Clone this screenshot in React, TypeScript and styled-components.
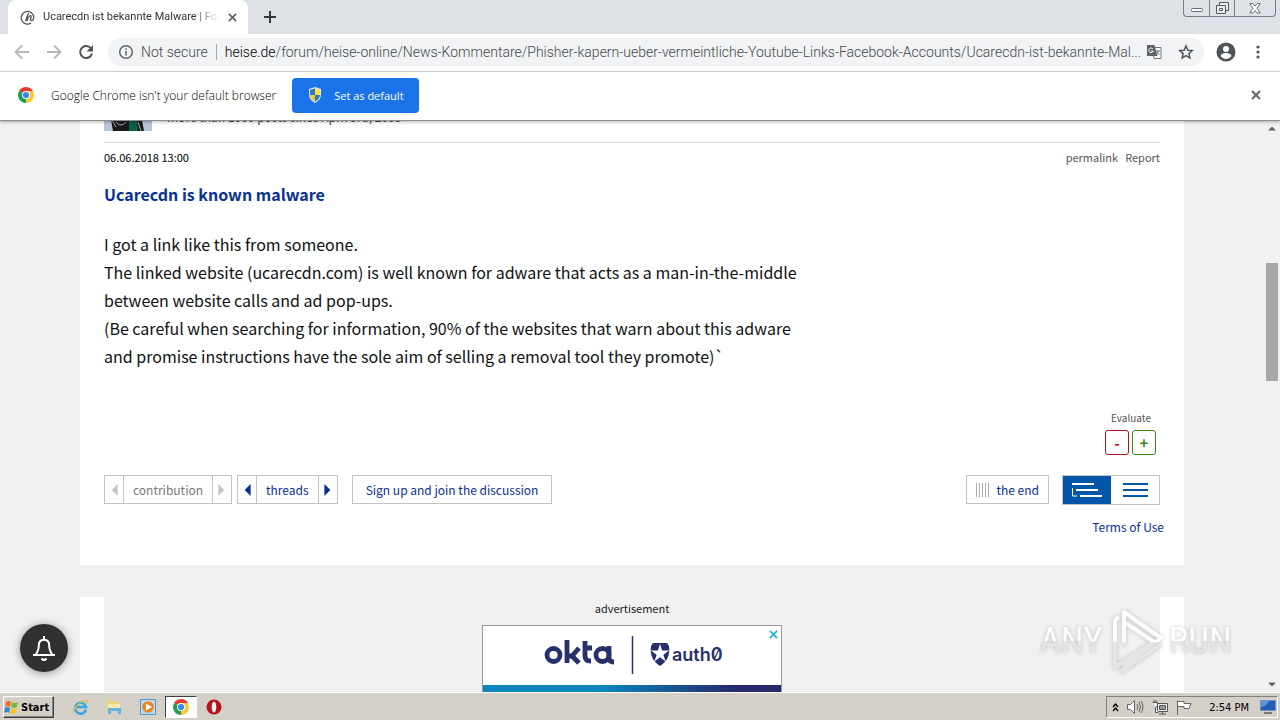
import React from "react";
import styled, { createGlobalStyle } from "styled-components";

const tabFont = `Roboto, "Noto Sans", sans-serif`;
const uiFont = `"Open Sans", "Noto Sans", sans-serif`;
const pageFont = `"Noto Sans CJK SC", "Noto Sans", sans-serif`;

const GlobalStyle = createGlobalStyle`
  * { box-sizing: border-box; }
  body { margin: 0; background: #f1f1f1; font-family: ${pageFont}; color: #000; }
  button { font: inherit; color: inherit; padding: 0; border: 0; background: none; cursor: pointer; }
  a { text-decoration: none; color: inherit; }
  h1, p { margin: 0; }
  svg { display: block; flex: none; }
`;

const Desktop = styled.div`
  height: 100vh;
  display: flex;
  flex-direction: column;
  overflow: hidden;
`;

const TabStrip = styled.div`
  display: flex;
  align-items: flex-start;
  height: 34px;
  padding-left: 8px;
  background: #dee1e6;
  font-family: ${tabFont};
`;

const Tab = styled.div`
  display: flex;
  align-items: center;
  width: 240px;
  height: 34px;
  padding: 0 10px 0 12px;
  background: #fff;
  border-radius: 8px 8px 0 0;
`;

const TabTitle = styled.span`
  flex: 1;
  margin: 0 7px 0 8px;
  overflow: hidden;
  white-space: nowrap;
  font-size: 11px;
  line-height: 18px;
  color: #333;
  mask-image: linear-gradient(to right, #000 85%, transparent);
`;

const IconButton = styled.button<{ $w?: number; $h?: number }>`
  display: flex;
  flex: none;
  align-items: center;
  justify-content: center;
  width: ${(p) => p.$w ?? 16}px;
  height: ${(p) => p.$h ?? 16}px;
  color: #5f6368;
`;

const WindowButtons = styled.div`
  display: flex;
  width: 93px;
  height: 17px;
  margin: 0 4px 0 auto;
  border: 1px solid #767b86;
  border-top: 0;
  border-radius: 0 0 4px 4px;
`;

const WindowButton = styled(IconButton)`
  height: 16px;
  & + & { border-left: 1px solid #767b86; }
`;

const Toolbar = styled.div`
  display: flex;
  align-items: center;
  height: 38px;
  padding: 0 14px 2px;
  background: #fff;
  border-bottom: 1px solid #d8d8d8;
  font-family: ${tabFont};
`;

const NavButtons = styled.div`
  display: flex;
  gap: 16px;
  margin-right: 14px;
`;

const AddressBar = styled.div`
  display: flex;
  flex: 1;
  min-width: 0;
  align-items: center;
  height: 28px;
  padding: 0 10px;
  border-radius: 14px;
  background: #f1f3f4;
  font-size: 14px;
  font-weight: 300;
  line-height: 20px;
  color: #45484c;
  white-space: nowrap;
`;

const Security = styled.span`
  padding: 0 8px 0 7px;
  border-right: 1px solid #a6a8ab;
  line-height: 16px;
`;

const Url = styled.span`
  flex: 1;
  min-width: 0;
  padding: 0 10px 0 8px;
  overflow: hidden;
  b { font-weight: 300; color: #000; }
`;

const BarActions = styled.div`
  display: flex;
  gap: 16px;
`;

const MenuActions = styled.div`
  display: flex;
  align-items: center;
  gap: 14px;
  margin-left: 12px;
`;

const InfoBar = styled.div`
  position: relative;
  z-index: 1;
  display: flex;
  align-items: center;
  height: 49px;
  padding: 0 16px 2px 18px;
  background: #fff;
  border-bottom: 1px solid #8e8e8e;
  box-shadow: 0 1px 3px rgba(0, 0, 0, 0.3);
  font-family: ${uiFont};
  font-size: 12px;
  font-weight: 300;
  color: #000;
`;

const InfoText = styled.span`
  margin: 0 16px 0 17px;
`;

const DefaultButton = styled.button`
  display: flex;
  align-items: center;
  gap: 11px;
  height: 35px;
  padding: 0 15px;
  border-radius: 4px;
  background: #1a73e8;
  color: #fff;
  font-size: 11px;
  font-weight: 400;
`;

const Push = styled.div`
  margin-left: auto;
`;

const Viewport = styled.div`
  position: relative;
  flex: 1;
  min-height: 0;
  display: flex;
  background: #f1f1f1;
`;

const Page = styled.div`
  flex: 1;
  min-width: 0;
  overflow: hidden;
`;

const Card = styled.main`
  max-width: 1104px;
  margin: 0 auto;
  padding: 0 24px 27px;
  background: #fff;
`;

const AuthorRow = styled.div`
  display: flex;
  align-items: flex-end;
  gap: 15px;
  height: 22px;
  padding-bottom: 11px;
  overflow: hidden;
  border-bottom: 1px solid #d9d9d9;
  font-size: 12px;
  line-height: 28px;
  color: #444;
`;

const MetaRow = styled.div`
  display: flex;
  justify-content: space-between;
  padding-top: 4px;
  font-size: 11px;
  line-height: 20px;
`;

const MetaLinks = styled.div`
  display: flex;
  gap: 7px;
  color: #555;
`;

const Title = styled.h1`
  margin-top: 14px;
  font-size: 16px;
  line-height: 26px;
  font-weight: 700;
  color: #0a3190;
`;

const Body = styled.p`
  max-width: 740px;
  margin-top: 23px;
  font-size: 16px;
  line-height: 28px;
  color: #111;
`;

const Rating = styled.div`
  display: flex;
  flex-direction: column;
  align-items: flex-end;
  gap: 1px;
  margin-top: 37px;
  padding-right: 4px;
  font-size: 10px;
  line-height: 22px;
  color: #555;
`;

const RatingLabel = styled.span`
  padding-right: 5px;
`;

const RateButtons = styled.div`
  display: flex;
  gap: 3px;
`;

const RateButton = styled.button<{ $color: string }>`
  width: 24px;
  height: 25px;
  border: 1px solid ${(p) => p.$color};
  border-radius: 3px;
  color: ${(p) => p.$color};
  font-size: 15px;
  font-weight: 700;
  line-height: 20px;
`;

const ActionRow = styled.div`
  display: flex;
  align-items: flex-start;
  margin-top: 20px;
  font-size: 12px;
  line-height: 28px;
  color: #0a3190;
`;

const Pager = styled.div<{ $muted?: boolean }>`
  display: flex;
  height: 29px;
  margin-right: 5px;
  border: 1px solid #c4c4c4;
  color: ${(p) => (p.$muted ? "#777" : "#0a3190")};
`;

const PagerLabel = styled.span`
  padding: 0 9px;
  border: solid #c4c4c4;
  border-width: 0 1px;
`;

const Arrow = styled(IconButton)<{ $muted?: boolean }>`
  width: 18px;
  height: 27px;
  color: ${(p) => (p.$muted ? "#c4c4c4" : "#0a3190")};
`;

const BoxLink = styled.a<{ $pad: number }>`
  display: flex;
  align-items: center;
  gap: 7px;
  height: 29px;
  padding: 0 ${(p) => p.$pad}px;
  border: 1px solid #c4c4c4;
`;

const JoinLink = styled(BoxLink)`
  margin-left: 9px;
`;

const ViewSwitch = styled.div`
  display: flex;
  margin-left: 13px;
  border: 1px solid #c4c4c4;
  height: 30px;
`;

const ViewButton = styled(IconButton)<{ $active?: boolean }>`
  width: 48px;
  height: 28px;
  color: ${(p) => (p.$active ? "#fff" : "#0356a8")};
  background: ${(p) => (p.$active ? "#0356a8" : "#fff")};
`;

const Terms = styled.a`
  display: block;
  width: max-content;
  margin: 11px -4px 0 auto;
  font-size: 12px;
  line-height: 22px;
  color: #0a3190;
`;

const AdSection = styled.section`
  max-width: 1104px;
  height: 95px;
  margin: 32px auto 0;
  border: solid #fff;
  border-width: 0 24px;
  display: flex;
  flex-direction: column;
  align-items: center;
  font-size: 11px;
  line-height: 22px;
  color: #222;
`;

const AdBox = styled.div`
  position: relative;
  width: 300px;
  height: 67px;
  margin-top: 6px;
  display: flex;
  flex-direction: column;
  border: 1px solid #999;
  border-bottom: 0;
  background: #fff;
`;

const AdLogos = styled.div`
  flex: 1;
  display: flex;
  align-items: center;
  justify-content: center;
  padding: 0 0 2px 6px;
`;

const AdStripe = styled.div`
  height: 7px;
  background: linear-gradient(to right, #0c86bd 40%, #25296a 85%);
`;

const AdClose = styled(IconButton)`
  position: absolute;
  top: 0;
  right: 0;
  color: #1fb5cf;
`;

const ScrollTrack = styled.div`
  display: flex;
  flex-direction: column;
  align-items: center;
  width: 16px;
  color: #444;
`;

const ScrollSpace = styled.div<{ $grow: number }>`
  flex: ${(p) => p.$grow} 1 0;
`;

const ScrollThumb = styled.div`
  flex: 118 1 0;
  width: 12px;
  background: #a8a8a8;
`;

const Bell = styled.button`
  position: absolute;
  left: 20px;
  bottom: 20px;
  display: flex;
  align-items: center;
  justify-content: center;
  width: 48px;
  height: 48px;
  border-radius: 50%;
  background: #303030;
  box-shadow: 0 1px 8px rgba(0, 0, 0, 0.4);
`;

const Watermark = styled.div`
  position: absolute;
  right: 48px;
  bottom: 18px;
  display: flex;
  align-items: center;
  gap: 5px;
  font-family: "Roboto Condensed", "Liberation Sans Narrow", "Liberation Sans", sans-serif;
  font-size: 37px;
  line-height: 66px;
  filter: drop-shadow(0 0 2px rgba(0, 0, 0, 0.25));
  opacity: 0.85;
  pointer-events: none;
`;

const WatermarkWord = styled.span`
  color: transparent;
  background: linear-gradient(#fff 50%, #e3e3e3 50%);
  background-clip: text;
`;

const Taskbar = styled.div`
  display: flex;
  align-items: center;
  height: 28px;
  padding: 1px 2px 0 3px;
  background: #d4d0c8;
  border-top: 1px solid #fff;
  font-family: "DejaVu Sans Condensed", "DejaVu Sans", sans-serif;
  font-size: 11px;
`;

const StartButton = styled.button`
  display: flex;
  align-items: center;
  gap: 2px;
  width: 51px;
  height: 22px;
  border: 1px solid;
  border-color: #fff #404040 #404040 #fff;
  box-shadow: inset -1px -1px #808080;
  font-weight: 700;
  color: #000;
`;

const QuickLaunch = styled.div`
  display: flex;
  align-items: center;
  margin-left: 9px;
`;

const TaskButton = styled.button<{ $active?: boolean }>`
  display: flex;
  align-items: center;
  justify-content: center;
  width: ${(p) => (p.$active ? 32 : 34)}px;
  height: 22px;
  border: 1px solid;
  border-color: ${(p) => (p.$active ? "#404040 #fff #fff #404040" : "transparent")};
  background: ${(p) => (p.$active ? "#fff" : "none")};
`;

const Tray = styled.div`
  display: flex;
  align-items: center;
  gap: 8px;
  height: 22px;
  margin-left: auto;
  padding: 0 1px 0 5px;
  border: 1px solid;
  border-color: #808080 #fff #fff #808080;
`;

const Clock = styled.time`
  margin: 0 3px 0 9px;
`;

const Cross = ({ size }: { size: number }) => (
  <svg width={size} height={size} viewBox="0 0 10 10" stroke="currentColor" strokeWidth="1.9">
    <path d="M1 1l8 8M9 1l-8 8" />
  </svg>
);

const ChromeLogo = () => (
  <svg width="16" height="16" viewBox="0 0 16 16">
    <path d="M8 8L1.1 4A8 8 0 0 1 14.9 4z" fill="#e33b2e" />
    <path d="M8 8L14.9 4A8 8 0 0 1 8 16z" fill="#fcc934" />
    <path d="M8 8L8 16A8 8 0 0 1 1.1 4z" fill="#1e9e54" />
    <path d="M8 4h6.9L11.5 10 8 16l0-4z" fill="#fcc934" />
    <circle cx="8" cy="8" r="4" fill="#fff" />
    <circle cx="8" cy="8" r="3.1" fill="#3f83ee" />
  </svg>
);

const Triangle = ({ dir, size = 12 }: { dir: "left" | "right" | "up" | "down"; size?: number }) => (
  <svg width={size} height={size} viewBox="0 0 10 10" fill="currentColor">
    <path d={{ left: "M8 0v10L3 5z", right: "M2 0v10l5-5z", up: "M0 7h10L5 2z", down: "M0 3h10L5 8z" }[dir]} />
  </svg>
);

const Shield = () => (
  <svg width="16" height="16" viewBox="0 0 16 16">
    <path d="M8 0l6 2v5c0 4-2 7-6 9-4-2-6-5-6-9V2z" fill="#dfe8ee" />
    <path d="M8 1.5V8H3V3z" fill="#2979c9" />
    <path d="M8 1.5L13 3v5H8z" fill="#ffe13b" />
    <path d="M3 8h5v6.7C5 13 3.3 11 3 8z" fill="#f5cc1c" />
    <path d="M8 8h5c-.3 3-2 5-5 6.700z" fill="#2979c9" />
  </svg>
);

const Avatar = () => (
  <svg width="48" height="11" viewBox="0 0 48 11">
    <path fill="#b7c6d8" d="M0 0h48v11H0z" />
    <path fill="#17191c" d="M7 0h31l2 11H9z" />
    <path fill="#0d6044" d="M25 1h8l1 10h-9z" />
    <path fill="none" stroke="#aaa" d="M8 0l4 7M12 2q5 6 10 0M34 2l3 9" />
  </svg>
);

export default function App() {
  return (
    <Desktop>
      <GlobalStyle />
      <TabStrip>
        <Tab>
          <svg width="15" height="15" viewBox="0 0 15 15" fill="none" stroke="#555" strokeWidth="1.3">
            <path d="M11 13A6.300 6.300 0 1 1 13.800 7.500c0 3.500-4 4-3.300 1.500l.6-2c.4-2-1.500-1.800-3.100.5M8.500 3L5.500 11M8 7.500L7 11" />
          </svg>
          <TabTitle>Ucarecdn ist bekannte Malware | Forum</TabTitle>
          <IconButton $w={12} aria-label="Close tab"><Cross size={9} /></IconButton>
        </Tab>
        <IconButton $w={44} $h={34} aria-label="New tab">
          <svg width="12" height="12" viewBox="0 0 12 12" stroke="#34373b" strokeWidth="2"><path d="M6 0v12M0 6h12" /></svg>
        </IconButton>
        <WindowButtons>
          <WindowButton $w={25} aria-label="Minimize">
            <svg width="12" height="16" viewBox="0 0 12 16"><rect x=".5" y="8.500" width="11" height="3" rx="1" fill="#fff" stroke="#666b75" /></svg>
          </WindowButton>
          <WindowButton $w={25} aria-label="Restore">
            <svg width="13" height="14" viewBox="0 0 13 14" fill="#eee" stroke="#555b66"><path d="M3.500 1.500h9v8h-9z" /><path d="M.5 4.500h9v8h-9z" /><path d="M3.500 7.500h3v2h-3z" /></svg>
          </WindowButton>
          <WindowButton $w={41} aria-label="Close window">
            <svg width="12" height="12" viewBox="0 0 12 12" fill="#fff" stroke="#666b75"><path d="M.8 1.500h3L6 4l2.200-2.500h3L8 6.300l3.200 4.700h-3L6 8.500 3.800 11h-3L4 6.300z" /></svg>
          </WindowButton>
        </WindowButtons>
      </TabStrip>

      <Toolbar>
        <NavButtons>
          <IconButton aria-label="Back">
            <svg width="16" height="16" viewBox="0 0 16 16" fill="none" stroke="#b4b6b9" strokeWidth="1.800"><path d="M15 8H2M8 1.500L1.500 8 8 14.500" /></svg>
          </IconButton>
          <IconButton aria-label="Forward">
            <svg width="16" height="16" viewBox="0 0 16 16" fill="none" stroke="#b4b6b9" strokeWidth="1.800"><path d="M1 8h13M8 1.500L14.500 8 8 14.500" /></svg>
          </IconButton>
          <IconButton aria-label="Reload">
            <svg width="16" height="16" viewBox="0 0 16 16"><path d="M13 4.500A6 6 0 1 0 14 9.500" fill="none" stroke="#505357" strokeWidth="2" /><path d="M15 1v6.500H8.500z" fill="#505357" /></svg>
          </IconButton>
        </NavButtons>
        <AddressBar>
          <svg width="16" height="16" viewBox="0 0 16 16" fill="none" stroke="#5f6368" strokeWidth="1.500"><circle cx="8" cy="8" r="6.300" /><path d="M8 7v4.500M8 4.200v1.600" /></svg>
          <Security>Not secure</Security>
          <Url><b>heise.de</b>/forum/heise-online/News-Kommentare/Phisher-kapern-ueber-vermeintliche-Youtube-Links-Facebook-Accounts/Ucarecdn-ist-bekannte-Mal...</Url>
          <BarActions>
            <IconButton aria-label="Translate">
              <svg width="16" height="16" viewBox="0 0 16 16"><path d="M6 3.500h9v11H8z" fill="#fff" stroke="#74787d" /><path d="M1 1h7.500l3 11H1z" fill="#5f6368" /><path d="M7 5A2.300 2.300 0 1 0 7.300 7H5" fill="none" stroke="#fff" /><path d="M10 7h4M12 6v1c0 2-1 3-2 4M11 8l2.500 3" fill="none" stroke="#74787d" /></svg>
            </IconButton>
            <IconButton aria-label="Bookmark">
              <svg width="16" height="16" viewBox="0 0 16 16" fill="none" stroke="#505357" strokeWidth="1.500"><path d="M8 2l1.800 4.200 4.500.4-3.400 3 1 4.400L8 11.700 4.100 14l1-4.400-3.400-3 4.500-.4z" /></svg>
            </IconButton>
          </BarActions>
        </AddressBar>
        <MenuActions>
          <IconButton $w={20} $h={20} aria-label="Profile">
            <svg width="20" height="20" viewBox="0 0 20 20"><circle cx="10" cy="10" r="9.500" fill="#505357" /><circle cx="10" cy="7" r="3" fill="#fff" /><path d="M4.500 14c1-4 10-4 11 0-3 4-8 4-11 0z" fill="#fff" /></svg>
          </IconButton>
          <IconButton aria-label="Menu">
            <svg width="4" height="14" viewBox="0 0 4 14" fill="#505357"><circle cx="2" cy="2" r="1.600" /><circle cx="2" cy="7" r="1.600" /><circle cx="2" cy="12" r="1.600" /></svg>
          </IconButton>
        </MenuActions>
      </Toolbar>

      <InfoBar>
        <ChromeLogo />
        <InfoText>Google Chrome isn't your default browser</InfoText>
        <DefaultButton><Shield />Set as default</DefaultButton>
        <Push><IconButton aria-label="Dismiss"><Cross size={10} /></IconButton></Push>
      </InfoBar>

      <Viewport>
        <Page>
          <Card>
            <AuthorRow><Avatar /><span>more than 1000 posts since April 3rd, 2003</span></AuthorRow>
            <MetaRow>
              <time>06.06.2018 13:00</time>
              <MetaLinks><a href="#permalink">permalink</a><a href="#report">Report</a></MetaLinks>
            </MetaRow>
            <Title>Ucarecdn is known malware</Title>
            <Body>
              I got a link like this from someone.<br />
              The linked website (ucarecdn.com) is well known for adware that acts as a man-in-the-middle<br />
              between website calls and ad pop-ups.<br />
              (Be careful when searching for information, 90% of the websites that warn about this adware<br />
              and promise instructions have the sole aim of selling a removal tool they promote)`
            </Body>
            <Rating>
              <RatingLabel>Evaluate</RatingLabel>
              <RateButtons>
                <RateButton $color="#b5121b">-</RateButton>
                <RateButton $color="#3c8a12">+</RateButton>
              </RateButtons>
            </Rating>
            <ActionRow>
              <Pager $muted>
                <Arrow $muted aria-label="Previous contribution"><Triangle dir="left" /></Arrow>
                <PagerLabel>contribution</PagerLabel>
                <Arrow $muted aria-label="Next contribution"><Triangle dir="right" /></Arrow>
              </Pager>
              <Pager>
                <Arrow aria-label="Previous thread"><Triangle dir="left" /></Arrow>
                <PagerLabel>threads</PagerLabel>
                <Arrow aria-label="Next thread"><Triangle dir="right" /></Arrow>
              </Pager>
              <JoinLink $pad={13} href="#join">Sign up and join the discussion</JoinLink>
              <Push>
                <BoxLink $pad={9} href="#end">
                  <svg width="13" height="14" viewBox="0 0 13 14" stroke="#aaa"><path d="M.5 0v14M3.500 0v14M6.500 0v14M9.500 0v14M12.500 0v14" /></svg>
                  the end
                </BoxLink>
              </Push>
              <ViewSwitch>
                <ViewButton $active aria-label="Tree view">
                  <svg width="30" height="14" viewBox="0 0 30 14" fill="none" stroke="currentColor" strokeWidth="2"><path d="M0 1h22M4 7h22M8 13h22" /><path d="M.5 5v8H5" strokeWidth="1" /></svg>
                </ViewButton>
                <ViewButton aria-label="List view">
                  <svg width="25" height="14" viewBox="0 0 25 14" stroke="currentColor" strokeWidth="2"><path d="M0 1h25M0 7h25M0 13h25" /></svg>
                </ViewButton>
              </ViewSwitch>
            </ActionRow>
            <Terms href="#terms">Terms of Use</Terms>
          </Card>
          <AdSection>
            advertisement
            <AdBox>
              <AdLogos>
                <svg width="182" height="40" viewBox="0 0 182 40" fill="none" stroke="#26306b">
                  <g strokeWidth="4.800"><circle cx="9.500" cy="20" r="6.500" /><path d="M23 5v23M24 21h4l7-8M27 20l8 8M41 6v15q0 5 6 5M41 13h7" /><circle cx="58.500" cy="20" r="6.500" /><path d="M65 11v12q0 4 5 4" /></g>
                  <path d="M88.500 1v38" strokeWidth="1.500" />
                  <path fill="#26306b" stroke="none" d="M109 8h14l2 3q2 13-9 20-11-7-9-20z" />
                  <path fill="#fff" stroke="none" d="M116 9l2.100 6.600h7l-5.700 4.100 2.200 6.700-5.600-4.200-5.600 4.200 2.200-6.700-5.700-4.100h7z" />
                  <text x="128" y="26" fill="#26306b" stroke="none" fontFamily="Inter, sans-serif" fontSize="18" fontWeight="600" style={{ fontFeatureSettings: '"zero"' }}>auth0</text>
                </svg>
              </AdLogos>
              <AdStripe />
              <AdClose aria-label="Close advertisement"><Cross size={9} /></AdClose>
            </AdBox>
          </AdSection>
        </Page>
        <ScrollTrack>
          <IconButton aria-label="Scroll up"><Triangle dir="up" size={8} /></IconButton>
          <ScrollSpace $grow={126} />
          <ScrollThumb />
          <ScrollSpace $grow={295} />
          <IconButton aria-label="Scroll down"><Triangle dir="down" size={8} /></IconButton>
        </ScrollTrack>
        <Bell aria-label="Notifications">
          <svg width="24" height="28" viewBox="0 0 24 28" fill="none" stroke="#fff" strokeWidth="2"><path d="M1 21h22M3.500 20.500c4-4 3-8 3.500-11 1-5 9-5 10 0 .5 3-.5 7 3.500 11M12 2v3M9.500 24.500q2.500 3 5 0" /></svg>
        </Bell>
        <Watermark>
          <WatermarkWord>ANY</WatermarkWord>
          <svg width="56" height="66" viewBox="0 0 56 66" fill="none" strokeWidth="4" strokeLinejoin="round">
            <defs><linearGradient id="fade" x1="0" y1="0" x2="0" y2="1"><stop offset=".5" stopColor="#fff" /><stop offset=".5" stopColor="#e3e3e3" /></linearGradient></defs>
            <path stroke="url(#fade)" d="M16 38V4l37 26-38 28M16 14l30 20L7 59V12l4-3M12 64l41-28" />
          </svg>
          <WatermarkWord>RUN</WatermarkWord>
        </Watermark>
      </Viewport>

      <Taskbar>
        <StartButton>
          <svg width="15" height="15" viewBox="0 0 15 15"><path fill="#ee6a2c" d="M2 2q3-2 5 0L6 7Q4 5 1 7z" /><path fill="#7cb83a" d="M8 2q3 2 6 0l-1 5q-3 2-6 0z" /><path fill="#3585d6" d="M1 8q3-2 5 0l-1 5q-2-2-5 0z" /><path fill="#f7c62b" d="M7 8q3 2 6 0l-1 5q-3 2-6 0z" /></svg>
          Start
        </StartButton>
        <QuickLaunch>
          <TaskButton aria-label="Internet Explorer">
            <svg width="17" height="16" viewBox="0 0 17 16" fill="none"><path d="M14 10.500A5.500 5.500 0 1 1 14 8H5" stroke="#35a5e5" strokeWidth="2.500" /><path d="M2 14C-1 12 7 3 13 1.500c3-.5 3 1 2 2.500" stroke="#e9b93a" strokeWidth="1.200" /></svg>
          </TaskButton>
          <TaskButton aria-label="Explorer">
            <svg width="16" height="16" viewBox="0 0 16 16"><path fill="#f0d478" d="M1 3l1-2h4l1 2h7v9H1z" /><path fill="#f9e9a8" d="M2 5h12v4H2z" /><path fill="#62b4dc" d="M2 9h13v6h-3v-3H5v3H2z" /></svg>
          </TaskButton>
          <TaskButton aria-label="Media Player">
            <svg width="16" height="16" viewBox="0 0 16 16"><path fill="#b9d9f0" stroke="#5598cd" d="M.5.5h15v15H.5z" /><circle cx="8" cy="8" r="5.800" fill="#f08519" /><path fill="#fff" d="M6 4.500v7L12 8z" /></svg>
          </TaskButton>
          <TaskButton $active aria-label="Chrome"><ChromeLogo /></TaskButton>
          <TaskButton aria-label="Opera">
            <svg width="16" height="16" viewBox="0 0 16 16"><circle cx="8" cy="8" r="7.500" fill="#b4151c" /><ellipse cx="8" cy="8" rx="2.300" ry="5.500" fill="#eee" /></svg>
          </TaskButton>
        </QuickLaunch>
        <Tray>
          <svg width="7" height="9" viewBox="0 0 7 9" fill="none" stroke="#000" strokeWidth="1.300"><path d="M1 4l2.500-3L6 4M1 8l2.500-3L6 8" /></svg>
          <svg width="17" height="14" viewBox="0 0 17 14" fill="none" stroke="#666"><path fill="#fff" d="M.5 4.500h3l4-4v13l-4-4h-3z" /><path d="M10 4q2 3 0 6M12 2q3 5 0 10M14 1q4 6 0 12" /></svg>
          <svg width="16" height="15" viewBox="0 0 16 15" fill="#eee" stroke="#555"><path d="M5.500 3.500h10v8h-10zM7 14h7M10.500 12v2" /><path fill="#999" d="M7.500 5.500h6v4h-6z" /><path d="M.5 2.500h5v3l-2 2v5h3M2 0v2M4 0v2" /></svg>
          <svg width="16" height="15" viewBox="0 0 16 15" fill="#fff" stroke="#666"><path d="M1.500 15V.5M2 1.500h6v2h7l-2 5H8v-2H2" /></svg>
          <Clock>2:54 PM</Clock>
          <svg width="16" height="14" viewBox="0 0 16 14"><path fill="#245db7" stroke="#6a92c4" d="M.5.5h15v10H.5z" /><path fill="#5d95dc" d="M1 7q6-1 8-6H1z" /><path fill="#777" d="M4 12h8v2H4z" /></svg>
        </Tray>
      </Taskbar>
    </Desktop>
  );
}
